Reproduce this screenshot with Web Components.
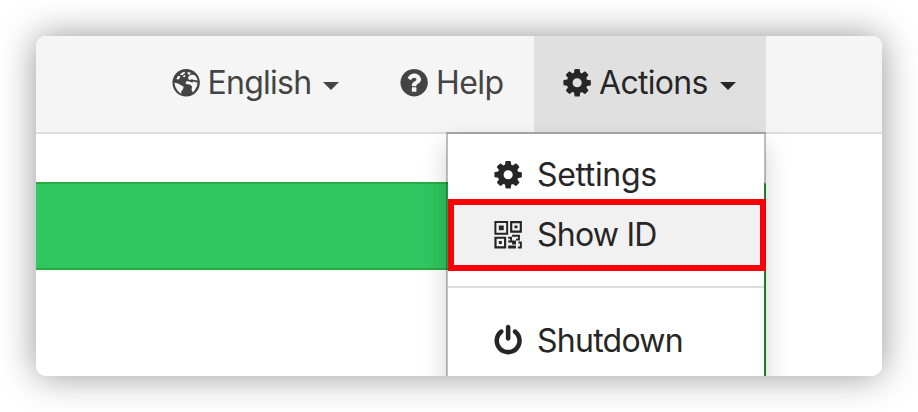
<!DOCTYPE html>
<html lang="en"><head><meta charset="utf-8"><title>Actions menu</title>
<style>html,body{margin:0;width:918px;height:412px;overflow:hidden;background:#fff}</style></head><body>
<app-window></app-window>
<script>
const icons = {
cog:'<path d="M1152 896q0-106-75-181t-181-75-181 75-75 181 75 181 181 75 181-75 75-181zm512-109v222q0 12-8 23t-20 13l-185 28q-19 54-39 91 35 50 107 138 10 12 10 25t-9 23q-27 37-99 108t-94 71q-12 0-26-9l-138-108q-44 23-91 38-16 136-29 186-7 28-36 28h-222q-14 0-24.500-8.500t-11.500-21.500l-28-184q-49-16-90-37l-141 107q-10 9-25 9-14 0-25-11-126-114-165-168-7-10-7-23 0-12 8-23 15-21 51-66.500t54-70.500q-27-50-41-99l-183-27q-13-2-21-12.500t-8-23.500v-222q0-12 8-23t19-13l186-28q14-46 39-92-40-57-107-138-10-12-10-24 0-10 9-23 26-36 98.500-107.500t94.500-71.500q13 0 26 10l138 107q44-23 91-38 16-136 29-186 7-28 36-28h222q14 0 24.500 8.500t11.500 21.500l28 184q49 16 90 37l142-107q9-9 24-9 13 0 25 10 129 119 165 170 7 8 7 22 0 12-8 23-15 21-51 66.500t-54 70.500q26 50 41 98l183 28q13 2 21 12.500t8 23.500z"/>',
help:'<path d="M1024 1376v-192q0-14-9-23t-23-9h-192q-14 0-23 9t-9 23v192q0 14 9 23t23 9h192q14 0 23-9t9-23zm256-672q0-88-55.500-163t-138.500-116-170-41q-243 0-371 213-15 24 8 42l132 100q7 6 19 6 16 0 25-12 53-68 86-92 34-24 86-24 48 0 85.500 26t37.500 59q0 38-20 61t-68 45q-63 28-115.500 86.500t-52.500 125.500v36q0 14 9 23t23 9h192q14 0 23-9t9-23q0-19 21.500-49.500t54.500-49.500q32-18 49-28.500t46-35 44.500-48 28-60.500 12.500-81zm384 192q0 209-103 385.500t-279.500 279.500-385.500 103-385.500-103-279.500-279.500-103-385.500 103-385.500 279.500-279.500 385.500-103 385.500 103 279.500 279.500 103 385.500z"/>',
power:'<path d="M1664 896q0 156-61 298t-164 245-245 164-298 61-298-61-245-164-164-245-61-298q0-182 80.500-343t226.500-270q43-32 95.500-25t83.500 50q32 42 24.500 94.500t-49.500 84.500q-98 74-151.500 181t-53.500 228q0 104 40.500 198.500t109.500 163.500 163.500 109.500 198.500 40.500 198.500-40.500 163.500-109.500 109.500-163.500 40.500-198.500q0-121-53.500-228t-151.500-181q-42-32-49.500-84.500t24.500-94.500q31-43 84-50t95 25q146 109 226.500 270t80.500 343zm-640-768v640q0 52-38 90t-90 38-90-38-38-90v-640q0-52 38-90t90-38 90 38 38 90z"/>',
globe:'<g transform="translate(128 128) scale(54.86)"><circle cx="14" cy="14" r="14"/><g fill="#f5f5f5"><path d="M4 10L6 7l2 .5L7.500 9.500 5.500 11zM7.500 5.500L10 3.500l3-.8-.5 1.800L10 6.500zM10.500 7.500l2-1.500 1 .8-1.500 2zM15.500 3l3.500.8-1.500 2-2-.5zM2 14l3 .5 3 1.500 3.500 2-.8 3-1.700 2v2.500L5.500 22.500l-2.500-4zM16 8.500l2-2.300 2.500-.4 2 .2 2 2.500 1.300 3.300-1.800-.4-2.500-.4-2-.5-1.500.8-1.500-.5zM14 12.500l2.500 0 2 .8 2 .5 1.500-1.300 2 1.300 1.500-.3-.3 3.500-2 4-2.200 3-1.500-2.500.5-3.500-1.500-2-3-.5-2-.5z"/></g></g>',
qr:'<g transform="translate(128 128) scale(54.86)" fill-rule="evenodd"><path d="M0 0h14v14H0zM2 2v10h10V2zM4.500 4.500h5v5h-5zM16 0h12v12H16zM18.200 2.200v7.600h7.600V2.200zM20.500 4.500h3v3h-3zM0 16h12v12H0zM2.200 18.200v7.600h7.600v-7.600zM4.500 20.500h3v3h-3zM18 14h8v6h-4v-2h2v-2h-6zM14 16h4v4h4v4h-4v-2h-4v-2h2v-2h-2zM24.500 21h3.500v7h-4v-2h2v-3h-1.500zM14 25h8v3h-8z"/><path fill="none" stroke="currentColor" stroke-width=".5" d="M1 1h12v12H1zM17 1h10v10H17zM1 17h10v10H1z"/></g>'};
const define=(name,markup)=>customElements.define(name,class extends HTMLElement{
 constructor(){super();this.attachShadow({mode:'open'}).innerHTML=markup}});
customElements.define('app-icon',class extends HTMLElement{
 connectedCallback(){if(!this.shadowRoot)this.attachShadow({mode:'open'}).innerHTML=`<style>:host{display:block;width:28px;height:28px;flex:none}svg{display:block;overflow:visible;fill:currentColor}</style><svg width="28" height="28" viewBox="104 128 1568 1568">${icons[this.getAttribute('name')]}</svg>`}});
define('nav-item',`<style>:host{box-sizing:border-box;display:flex;height:96px;align-items:center;padding-bottom:2px;gap:8px;color:#444;font:32px/40px Inter,sans-serif;letter-spacing:-.75px;white-space:nowrap}:host([active]){background:#e0e0e0;color:#262626}
i{display:none;border:8px solid transparent;border-top-color:currentColor;border-bottom:0;margin:5px 0 0 4px}:host([caret]) i{display:block}</style><slot name="icon"></slot><slot></slot><i></i>`);
define('menu-item',`<style>:host{box-sizing:border-box;display:flex;align-items:center;height:60px;padding-left:46px;gap:15px;color:#262626;font:32px/40px Inter,sans-serif;letter-spacing:-.75px;white-space:nowrap}:host([selected]){height:72px;margin-right:-2px;padding-left:40px;border:6px solid #fb0007;background:#f1f1f1}</style><slot name="icon"></slot><slot></slot>`);
define('action-menu',`<style>:host{display:block;box-sizing:border-box;width:320px;height:260px;border:2px solid rgba(0,0,0,.25);background:#fff;background-clip:padding-box;box-shadow:0 12px 24px rgba(0,0,0,.175)}hr{border:0;height:2px;background:#ddd;margin:15px 0 23px}.s{height:65px;display:flex}.s menu-item{padding-top:18px;letter-spacing:-.35px}</style>
<div class="s"><menu-item style="height:64px"><app-icon slot="icon" name="cog"></app-icon>Settings</menu-item></div><menu-item selected><app-icon slot="icon" name="qr"></app-icon>Show ID</menu-item><hr><menu-item><app-icon slot="icon" name="power"></app-icon>Shutdown</menu-item>`);
define('app-window',`<style>:host{display:block;box-sizing:border-box;width:918px;height:412px;padding:36px}.w{width:846px;height:340px;border-radius:10px;box-shadow:0 0 36px rgba(0,0,0,.42)}.clip{height:340px;border-radius:10px;overflow:hidden;background:#fff;position:relative}nav{height:96px;display:flex;background:#f5f5f5;border-bottom:2px solid #ddd;padding-left:135.500px}nav-item:nth-child(1){width:228.500px}nav-item:nth-child(2){width:134px;letter-spacing:-.6px}nav-item:nth-child(3){width:232px;padding-left:29px;letter-spacing:-.7px}.bar{box-sizing:border-box;width:730px;height:88px;margin-top:48px;background:#30c660;border:2px solid #28aa42;border-left:0;border-radius:0 4px 0 0}.edge{width:728px;height:106px;border-right:2px solid #28aa42}action-menu{position:absolute;left:410px;top:96px}</style>
<div class="w"><div class="clip"><nav><nav-item caret><app-icon slot="icon" name="globe"></app-icon>English</nav-item><nav-item><app-icon slot="icon" name="help"></app-icon>Help</nav-item><nav-item active caret><app-icon slot="icon" name="cog"></app-icon>Actions</nav-item></nav><div class="bar"></div><div class="edge"></div><action-menu></action-menu></div></div>`);
</script></body></html>
